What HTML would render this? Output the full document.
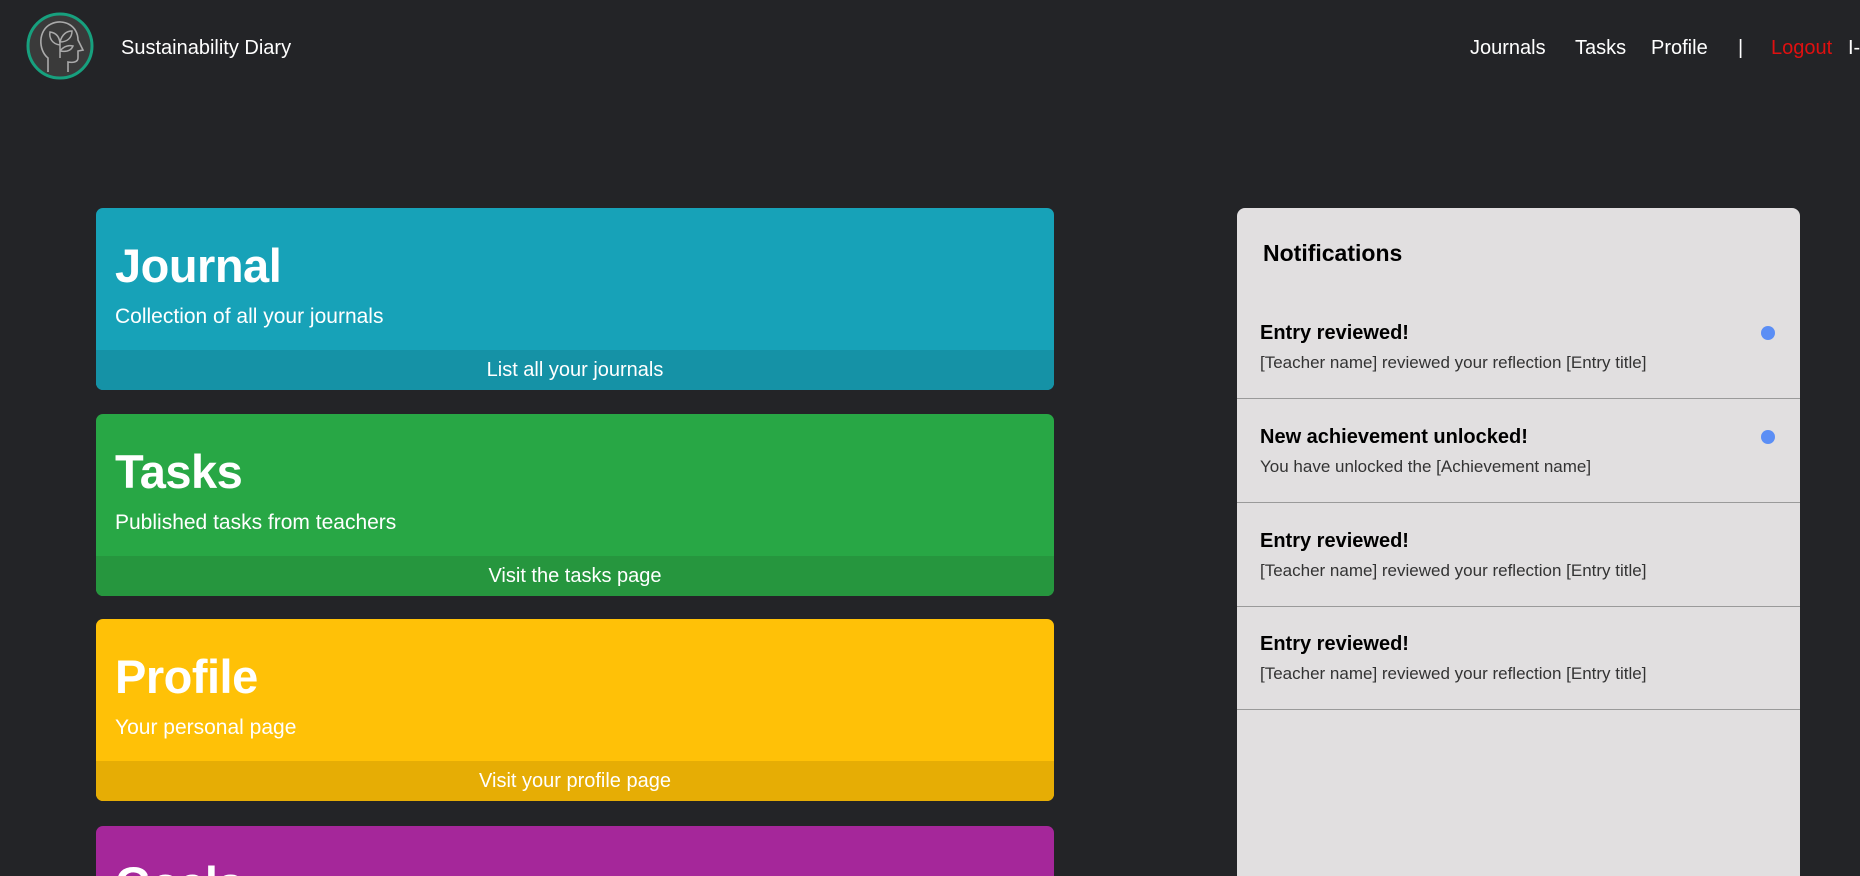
<!DOCTYPE html>
<html><head><meta charset="utf-8"><style>
*{margin:0;padding:0;box-sizing:border-box}
html,body{width:1860px;height:876px;overflow:hidden;background:#232427;font-family:"Liberation Sans",sans-serif;position:relative}
.a{position:absolute}
.nav{color:#fff;font-size:20px;top:37px}
.card{position:absolute;left:96px;width:958px;height:182px;border-radius:7px;overflow:hidden;color:#fff}
.card h1{position:absolute;left:19px;top:30px;font-size:47px;font-weight:bold;letter-spacing:-0.5px}
.card p{position:absolute;left:19px;top:97px;font-size:21px}
.card .f{position:absolute;left:0;right:0;bottom:0;height:40px;text-align:center;font-size:20px;line-height:40px}
.panel{left:1237px;top:208px;width:563px;height:668px;background:#e1dfe0;border-radius:8px 8px 0 0;overflow:hidden}
.it{position:absolute;left:0;width:563px;height:104px;border-bottom:1px solid #9a9a9a}
.it b{position:absolute;left:23px;top:27px;font-size:20px;color:#000}
.it span{position:absolute;left:23px;top:58px;font-size:17px;color:#333}
.dot{position:absolute;left:524px;top:31px;width:14px;height:14px;border-radius:50%;background:#5b8ef5}
</style></head><body>
<svg class="a" style="left:26px;top:12px" width="68" height="68" viewBox="0 0 68 68">
<circle cx="34" cy="34" r="32" fill="#3a3a3a" stroke="#17a07e" stroke-width="3"/>
<path d="M22 60 V46 C12 38 12 18 25 12 C38 6 52 14 52 28 L57 38 L52 39 V46 C52 50 47 51 42 50 V60" fill="none" stroke="#aaa" stroke-width="1.6"/>
<path d="M34 46 V30 M34 33 C26 32 23 26 24 20 C31 21 34 26 34 33 M34 30 C36 22 41 19 46 19 C46 26 41 30 34 30 M34 39 C38 34 43 33 47 34 C45 39 40 40 34 39" fill="none" stroke="#aaa" stroke-width="1.5"/>
</svg>
<div class="a" style="left:121px;top:37px;color:#fff;font-size:20px">Sustainability Diary</div>
<div class="a nav" style="left:1470px">Journals</div>
<div class="a nav" style="left:1575px">Tasks</div>
<div class="a nav" style="left:1651px">Profile</div>
<div class="a nav" style="left:1738px">|</div>
<div class="a nav" style="left:1771px;color:#e01010">Logout</div>
<div class="a nav" style="left:1848px">I-</div>

<div class="card" style="top:208px;background:#17a2b8"><h1>Journal</h1><p>Collection of all your journals</p><div class="f" style="background:#1592a6">List all your journals</div></div>
<div class="card" style="top:414px;background:#28a745"><h1>Tasks</h1><p>Published tasks from teachers</p><div class="f" style="background:#26963e">Visit the tasks page</div></div>
<div class="card" style="top:619px;background:#ffc107"><h1>Profile</h1><p>Your personal page</p><div class="f" style="background:#e6ad05">Visit your profile page</div></div>
<div class="card" style="top:826px;height:50px;border-radius:7px 7px 0 0;background:#a5279a"><h1>Goals</h1></div>

<div class="a panel">
<div class="a" style="left:26px;top:32px;font-size:23px;font-weight:bold;color:#000">Notifications</div>
<div class="it" style="top:87px"><b>Entry reviewed!</b><span>[Teacher name] reviewed your reflection [Entry title]</span><div class="dot"></div></div>
<div class="it" style="top:191px"><b>New achievement unlocked!</b><span>You have unlocked the [Achievement name]</span><div class="dot"></div></div>
<div class="it" style="top:295px"><b>Entry reviewed!</b><span>[Teacher name] reviewed your reflection [Entry title]</span></div>
<div class="it" style="top:398px"><b>Entry reviewed!</b><span>[Teacher name] reviewed your reflection [Entry title]</span></div>
</div>
</body></html>
